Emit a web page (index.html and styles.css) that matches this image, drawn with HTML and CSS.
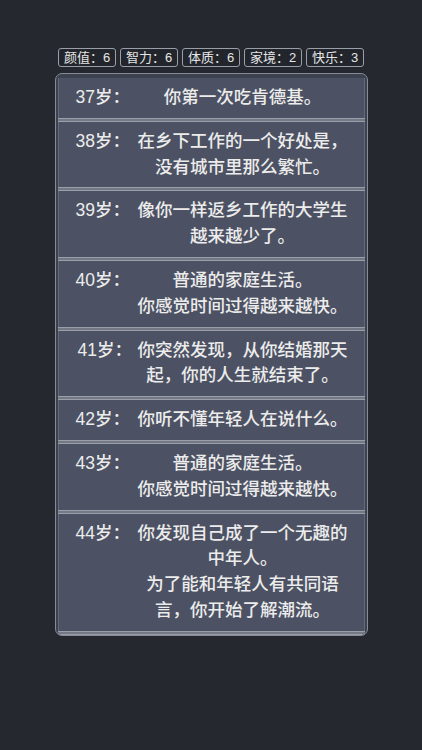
FILE: index.html
```html
<!DOCTYPE html>
<html lang="zh">
<head>
<meta charset="utf-8">
<link rel="stylesheet" href="styles.css">
</head>
<body>
<div class="page">
  <div class="stats">
    <div class="stat">颜值：6</div>
    <div class="stat">智力：6</div>
    <div class="stat">体质：6</div>
    <div class="stat">家境：2</div>
    <div class="stat">快乐：3</div>
  </div>
  <div class="panel">
    <div class="row"><div class="age">37岁：</div><div class="text">你第一次吃肯德基。</div></div>
    <div class="sep"></div>
    <div class="row"><div class="age">38岁：</div><div class="text">在乡下工作的一个好处是，<br>没有城市里那么繁忙。</div></div>
    <div class="sep"></div>
    <div class="row"><div class="age">39岁：</div><div class="text">像你一样返乡工作的大学生<br>越来越少了。</div></div>
    <div class="sep"></div>
    <div class="row"><div class="age">40岁：</div><div class="text">普通的家庭生活。<br>你感觉时间过得越来越快。</div></div>
    <div class="sep"></div>
    <div class="row"><div class="age age-41">41岁：</div><div class="text">你突然发现，从你结婚那天<br>起，你的人生就结束了。</div></div>
    <div class="sep"></div>
    <div class="row"><div class="age">42岁：</div><div class="text">你听不懂年轻人在说什么。</div></div>
    <div class="sep"></div>
    <div class="row"><div class="age">43岁：</div><div class="text">普通的家庭生活。<br>你感觉时间过得越来越快。</div></div>
    <div class="sep"></div>
    <div class="row"><div class="age">44岁：</div><div class="text">你发现自己成了一个无趣的<br>中年人。<br>为了能和年轻人有共同语<br>言，你开始了解潮流。</div></div>
    <div class="sep"></div>
  </div>
</div>
</body>
</html>
```

FILE: styles.css
```css
html, body {
  margin: 0;
  padding: 0;
  background: #25282f;
}
body {
  width: 422px;
  height: 750px;
  font-family: "Liberation Sans", "Noto Sans CJK SC", sans-serif;
  color: #ececec;
}
.page {
  padding-top: 48px;
  display: flex;
  flex-direction: column;
  align-items: center;
}
.stats {
  display: flex;
  gap: 4px;
  margin-bottom: 6px;
}
.stat {
  box-sizing: border-box;
  width: 58px;
  height: 19px;
  border: 1px solid #9a9ea6;
  border-radius: 3px;
  background: #22252c;
  font-size: 13px;
  line-height: 17px;
  text-align: center;
  color: #e6e6e6;
}
.panel {
  box-sizing: border-box;
  width: 313px;
  border: 1px solid #868b95;
  border-radius: 7px;
  background: #3d4250;
  padding: 4px 2px 0;
  overflow: hidden;
}
.row {
  display: flex;
  align-items: flex-start;
  background: #4c5263;
  border-left: 1px solid #646a77;
  border-right: 1px solid #646a77;
  padding: 7px 0;
  font-size: 17.5px;
  line-height: 25.8px;
  font-weight: 500;
}
.age {
  width: 73px;
  flex: none;
  padding-left: 17px;
  box-sizing: border-box;
  white-space: nowrap;
}
.age-41 {
  padding-left: 19px;
}
.text {
  width: 222px;
  text-align: center;
  white-space: nowrap;
}
.sep {
  height: 2px;
  background: #737884;
  border-top: 1px solid #999ea8;
  border-bottom: 1px solid #999ea8;
}
```
